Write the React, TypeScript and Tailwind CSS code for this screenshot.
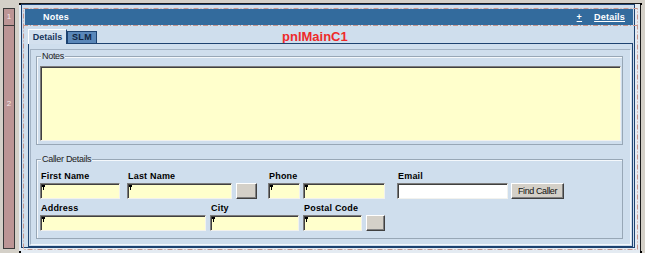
import React from "react";

function Req() {
  return (
    <span className="absolute left-[1px] top-[1px] pointer-events-none">
      <svg width="3" height="5" viewBox="0 0 3 5" className="block">
        <path d="M0 0h3v2H2v3H1V2H0z" fill="#000" />
      </svg>
    </span>
  );
}

function Field({ w, white = false, req = true }: { w: string; white?: boolean; req?: boolean }) {
  return (
    <div
      className={`relative h-[16px] ${w} ${
        white ? "bg-white" : "bg-[#ffffcc]"
      } border border-[#7c7c7c] border-b-[#f2f2ee] border-r-[#f2f2ee] shadow-[inset_1px_1px_0_#404040]`}
    >
      {req && <Req />}
    </div>
  );
}

function Btn({ w, children }: { w: string; children?: React.ReactNode }) {
  return (
    <div
      className={`h-[16px] ${w} bg-[#d4d0c8] border border-[#ffffff] border-r-[#404040] border-b-[#404040] shadow-[inset_-1px_-1px_0_#808080] flex items-center justify-center text-[9px] leading-[10px] tracking-[-0.4px] text-[#111]`}
    >
      {children}
    </div>
  );
}

function Label({ children }: { children: React.ReactNode }) {
  return (
    <div className="h-[11px] pl-[1px] text-[9px] leading-[11px] font-bold tracking-[0.2px] text-black whitespace-nowrap">
      {children}
    </div>
  );
}

function Legend({ children }: { children: React.ReactNode }) {
  return (
    <span className="absolute -top-[6px] left-[4px] px-[1px] bg-[#cfdeed] text-[9px] leading-[11px] tracking-[-0.3px] text-[#222] whitespace-nowrap">
      {children}
    </span>
  );
}

export default function App() {
  return (
    <div className="relative flex w-[645px] h-[253px] overflow-hidden bg-[#d4d0c8] font-['Liberation_Sans',Arial,sans-serif]">
      {/* ruler */}
      <div className="w-[19px] shrink-0 pt-[8px] pl-[3px]">
        <div className="w-[12px] h-[241px] border border-[#3a3a3a] bg-[#bc9595] flex flex-col text-[8px] leading-[10px] text-[#f5e8e8]">
          <div className="h-[17px] border-b border-[#3a3a3a] flex items-center justify-center">1</div>
          <div className="flex-1 pt-[73px] text-center">2</div>
        </div>
      </div>

      {/* main */}
      <div className="mt-[3px] w-[622px] h-[250px] shrink-0 border-t border-r border-[#1a1a1a] bg-[#e4ebf2] pl-[2px]">
        <div className="w-[614px] h-[244px] border border-[#1d4270] bg-[#cfdeed] flex flex-col">
          {/* header */}
          <div className="mt-[4px] ml-[3px] w-[608px] h-[16px] shrink-0 bg-[#336b9d] flex items-center pl-[18px] pr-[8px] text-white text-[9px] leading-[11px] font-bold tracking-[0.2px]">
            <span>Notes</span>
            <span className="ml-auto underline">+</span>
            <span className="ml-[12px] underline">Details</span>
          </div>

          {/* tabs */}
          <div className="mt-[4px] ml-[6px] h-[14px] shrink-0 flex items-end">
            <div className="relative z-10 -mb-[1px] h-[15px] w-[39px] bg-[#d3e0ee] border-t border-l border-white border-r border-r-[#1d4270] flex items-center justify-center text-[9px] leading-[11px] font-bold text-[#17355c]">
              Details
            </div>
            <div className="h-[12px] w-[30px] bg-[#5a87b9] border border-b-0 border-[#1d4270] flex items-center justify-center text-[9px] leading-[11px] font-bold text-[#0f2440] tracking-[0.3px]">
              SLM
            </div>
            <div className="self-start ml-[185px] h-[14px] text-[13px] leading-[15px] font-bold text-[#ee2a2a]">
              pnlMainC1
            </div>
          </div>

          {/* tab panel */}
          <div className="ml-[6px] w-[605px] h-[204px] shrink-0 border border-[#1d4270] pt-[5px] px-[1px]">
            <div className="w-[601px] h-[196px] border-t border-l border-[#a3b3c4] border-r border-r-[#f4f8fc] border-b border-b-[#f4f8fc]">
              {/* Notes fieldset */}
              <div className="relative ml-[5px] mt-[6px] w-[587px] h-[89px] border border-[#98a7b6] shadow-[inset_1px_1px_0_#f4f8fc] pt-[9px] pl-[3px]">
                <Legend>Notes</Legend>
                <div className="w-[581px] h-[75px] bg-[#ffffcc] border border-[#7c7c7c] border-b-[#f2f2ee] border-r-[#f2f2ee] shadow-[inset_1px_1px_0_#404040]" />
              </div>

              {/* Caller details */}
              <div className="relative ml-[5px] mt-[14px] w-[587px] h-[80px] border border-[#98a7b6] shadow-[inset_1px_1px_0_#f4f8fc] pt-[11px] pl-[3px]">
                <Legend>Caller Details</Legend>
                <div className="flex">
                  <div className="flex flex-col gap-[1px]">
                    <Label>First Name</Label>
                    <Field w="w-[80px]" />
                  </div>
                  <div className="ml-[7px] flex flex-col gap-[1px]">
                    <Label>Last Name</Label>
                    <div className="flex gap-[4px]">
                      <Field w="w-[105px]" />
                      <Btn w="w-[21px]" />
                    </div>
                  </div>
                  <div className="ml-[11px] flex flex-col gap-[1px]">
                    <Label>Phone</Label>
                    <div className="flex gap-[3px]">
                      <Field w="w-[32px]" />
                      <Field w="w-[82px]" />
                    </div>
                  </div>
                  <div className="ml-[12px] flex flex-col gap-[1px]">
                    <Label>Email</Label>
                    <div className="flex gap-[3px]">
                      <Field w="w-[111px]" white req={false} />
                      <Btn w="w-[53px]">Find Caller</Btn>
                    </div>
                  </div>
                </div>
                <div className="mt-[4px] flex">
                  <div className="flex flex-col gap-[1px]">
                    <Label>Address</Label>
                    <Field w="w-[166px]" />
                  </div>
                  <div className="ml-[4px] flex flex-col gap-[1px]">
                    <Label>City</Label>
                    <Field w="w-[89px]" />
                  </div>
                  <div className="ml-[4px] flex flex-col gap-[1px]">
                    <Label>Postal Code</Label>
                    <div className="flex gap-[4px]">
                      <Field w="w-[59px]" />
                      <Btn w="w-[19px]" />
                    </div>
                  </div>
                </div>
              </div>
            </div>
          </div>
        </div>
      </div>

      {/* designer selection overlay */}
      <svg className="absolute left-0 top-0 pointer-events-none" width="645" height="253">
        <rect x="23.5" y="8.5" width="614" height="241" fill="none" stroke="#c8968c" strokeDasharray="5 2 1 2" />
        <line x1="23" y1="25.5" x2="637" y2="25.5" stroke="#c8968c" strokeDasharray="5 2 1 2" />
        <rect x="19" y="3" width="2" height="2" fill="#000" />
        <rect x="640" y="3" width="2" height="2" fill="#000" />
        <rect x="19" y="251" width="2" height="2" fill="#000" />
        <rect x="640" y="251" width="2" height="2" fill="#000" />
      </svg>
    </div>
  );
}
